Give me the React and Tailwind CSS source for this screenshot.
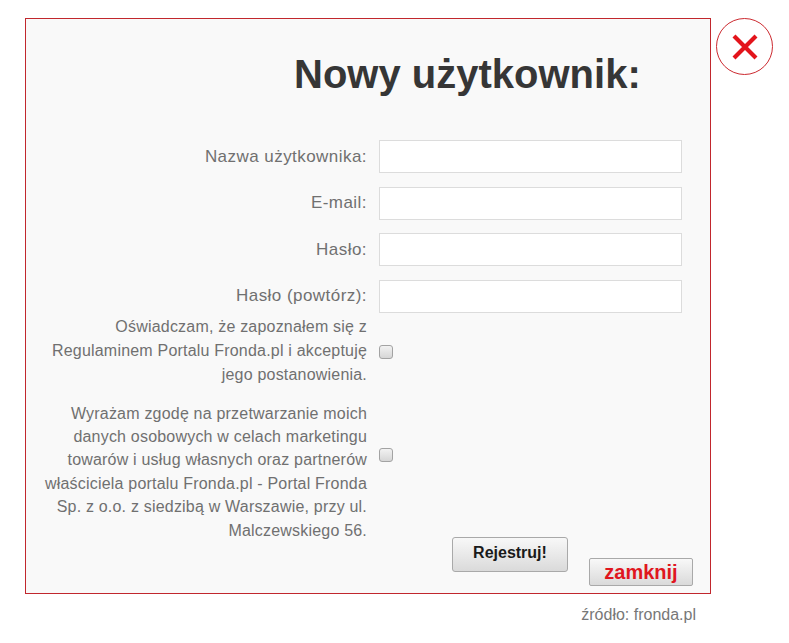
import React from 'react';

const fields = ['Nazwa użytkownika:', 'E-mail:', 'Hasło:', 'Hasło (powtórz):'];

function Checkbox() {
  return (
    <span className="block w-[14px] h-[14px] rounded-[3px] border border-[#a3a3a3] bg-gradient-to-b from-[#f2f2f2] to-[#d6d6d6]" />
  );
}

export default function App() {
  return (
    <div className="w-[789px] h-[643px] bg-white font-['Liberation_Sans',Arial,sans-serif] relative">
      <div className="pt-[18px] pl-[25px]">
        {/* Panel */}
        <div className="w-[686px] h-[576px] border border-[#c1272d] bg-[#f9f9f9]">
          <h1 className="mt-[35px] pl-[268px] text-[40px] leading-[40px] font-bold text-[#363636]">
            Nowy użytkownik:
          </h1>

          <div className="mt-[46px] flex flex-col gap-[13.5px]">
            {fields.map((f) => (
              <div key={f} className="flex items-center">
                <label className="w-[341px] text-right text-[17px] text-[#707070] tracking-[0.45px]">{f}</label>
                <input
                  type="text"
                  className="ml-[12px] w-[303px] h-[33px] bg-white border border-[#dcdcdc] outline-none"
                />
              </div>
            ))}
          </div>

          <div className="mt-[2px] flex items-start">
            <p className="w-[341px] text-right text-[16px] leading-[24px] text-[#707070] tracking-[0.2px] whitespace-nowrap">
              Oświadczam, że zapoznałem się z<br />
              Regulaminem Portalu Fronda.pl i akceptuję<br />
              jego postanowienia.
            </p>
            <div className="ml-[12px] mt-[30px]">
              <Checkbox />
            </div>
          </div>

          <div className="mt-[15px] flex items-start">
            <p className="w-[341px] text-right text-[16px] leading-[23.4px] text-[#707070] tracking-[0.2px] whitespace-nowrap">
              Wyrażam zgodę na przetwarzanie moich<br />
              danych osobowych w celach marketingu<br />
              towarów i usług własnych oraz partnerów<br />
              właściciela portalu Fronda.pl - Portal Fronda<br />
              Sp. z o.o. z siedzibą w Warszawie, przy ul.<br />
              Malczewskiego 56.
            </p>
            <div className="ml-[12px] mt-[46px]">
              <Checkbox />
            </div>
          </div>

          <div className="-mt-[5px] flex items-start">
            <button className="ml-[426px] w-[116px] h-[35px] rounded-[3px] border border-[#a9a9a9] bg-gradient-to-b from-[#f8f8f8] to-[#dadada] text-[16px] font-bold text-[#1a1a1a] pb-[3px]">
              Rejestruj!
            </button>
            <button className="mt-[21px] ml-[21px] w-[104px] h-[28px] rounded-[2px] border border-[#a9a9a9] bg-gradient-to-b from-[#f8f8f8] to-[#dadada] text-[20px] leading-[24px] font-bold text-[#e0161e]">
              zamknij
            </button>
          </div>
        </div>

        <p className="w-[671px] mt-[9px] text-right text-[16px] text-[#777] font-light">źródło: fronda.pl</p>
      </div>

      {/* Close circle */}
      <div className="absolute left-[716px] top-[18px] w-[57px] h-[57px] rounded-full border border-[#cc2a30] flex items-center justify-center">
        <svg width="28" height="28" viewBox="0 0 28 28">
          <path d="M3 3 L25 25 M25 3 L3 25" stroke="#e3141b" strokeWidth="4.2" strokeLinecap="butt" />
        </svg>
      </div>
    </div>
  );
}
